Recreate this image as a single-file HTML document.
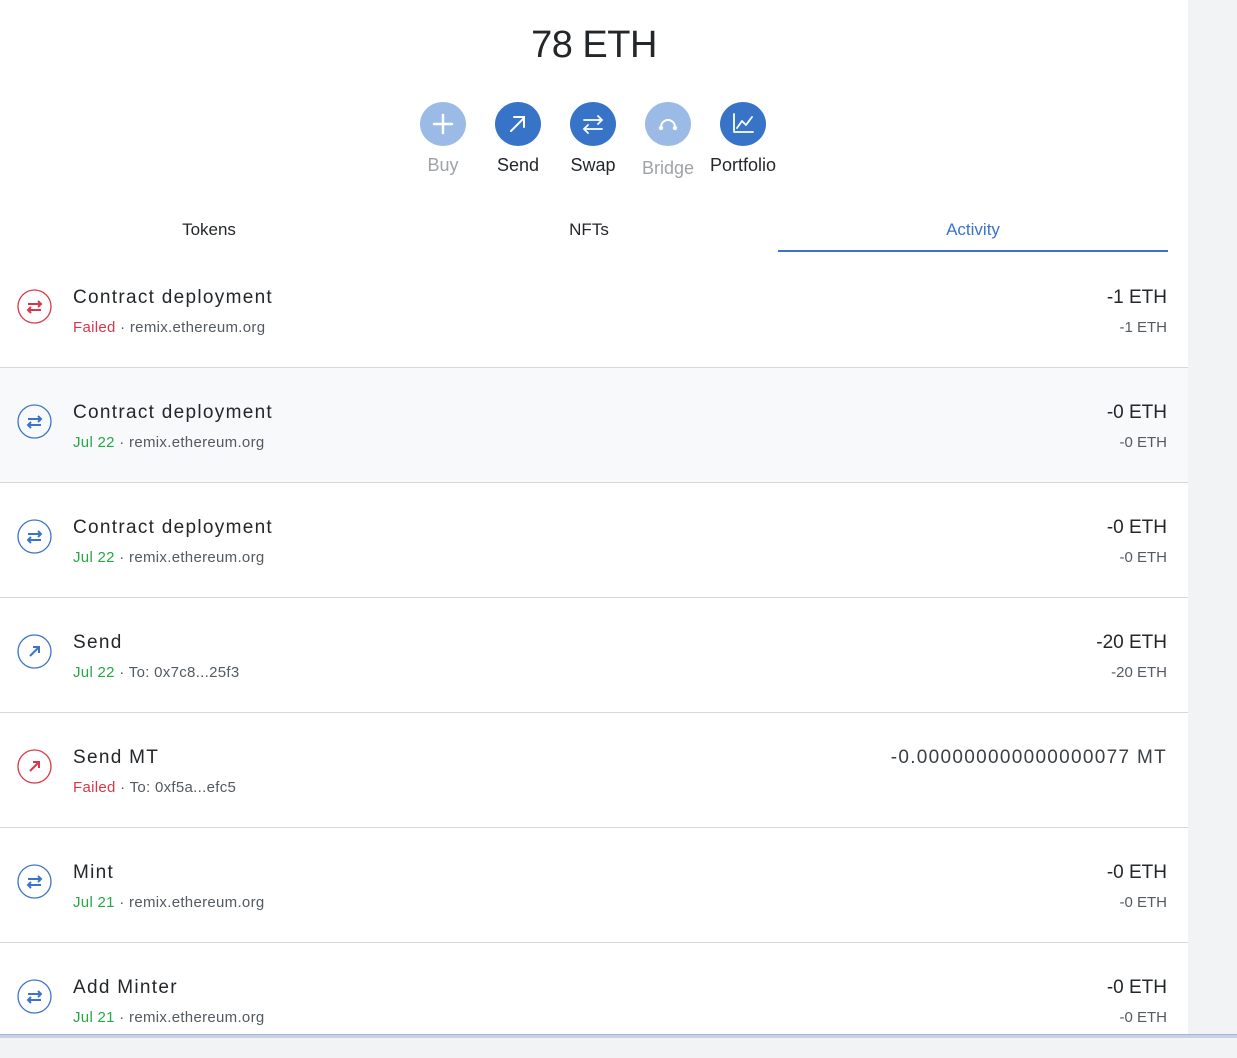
<!DOCTYPE html>
<html><head><meta charset="utf-8"><style>
*{margin:0;padding:0;box-sizing:border-box}
body{width:1237px;height:1038px;overflow:hidden;background:#f2f3f4;font-family:"Liberation Sans",sans-serif;color:#24272a;position:relative}
.main{position:absolute;left:0;top:0;width:1188px;height:1038px;background:#fff}
.bal{position:absolute;top:24px;left:0;width:1188px;text-align:center;font-size:38px;color:#24272a;letter-spacing:-0.5px}
.btn{position:absolute;top:102px;width:46px;height:44px;border-radius:50%;background:#3773c7}
.btn.dis{background:#9bbbe6}
.btn svg{position:absolute;left:0;top:0}
.bl{position:absolute;top:155px;font-size:18px;width:100px;text-align:center;color:#24272a}
.bl.dis{color:#9fa3a8}
.tab{position:absolute;top:220px;font-size:17px;width:390px;text-align:center}
.ul{position:absolute;left:778px;top:250px;width:390px;height:2px;background:#3a74c9}
.row{position:absolute;left:0;width:1188px;height:115px;border-bottom:1px solid #d6d9dc}
.row.alt{background:#f7f9fb}
.ic{position:absolute;left:17px;top:36px;width:35px;height:35px}
.t{position:absolute;left:73px;top:34px;font-size:19px;color:#24272a;letter-spacing:1.3px}
.s{position:absolute;left:73px;top:66px;font-size:15px;color:#535a61;letter-spacing:0.3px}
.r1{position:absolute;right:21px;top:34px;font-size:19px;color:#24272a}
.r2{position:absolute;right:21px;top:66px;font-size:15px;color:#535a61}
.f{color:#d73847}.g{color:#28a745}
.bot{position:absolute;left:0;top:1034px;width:1237px;height:4px;background:#c7d2e6;border-top:1px solid #aab4c4}
</style></head><body>
<div class="main">
<div class="bal">78 ETH</div>
<div class="btn dis" style="left:420px"><svg width="46" height="44"><path d="M23 13v18M14 22h18" stroke="#fff" stroke-width="2.5" stroke-linecap="round"/></svg></div>
<div class="btn" style="left:495px"><svg width="46" height="44"><path d="M16 29L29 16M19 15h10v10" stroke="#fff" stroke-width="2" fill="none" stroke-linecap="round"/></svg></div>
<div class="btn" style="left:570px"><svg width="46" height="44"><path d="M14 18h18M28 14l4 4-4 4M32 27H14M18 23l-4 4 4 4" stroke="#fff" stroke-width="1.8" fill="none" stroke-linecap="round"/></svg></div>
<div class="btn dis" style="left:645px"><svg width="46" height="44"><path d="M16 25a7 7 0 0 1 14 0" stroke="#fff" stroke-width="2" fill="none"/><circle cx="16" cy="26" r="2.2" fill="#fff"/><circle cx="30" cy="26" r="2.2" fill="#fff"/></svg></div>
<div class="btn" style="left:720px"><svg width="46" height="44"><path d="M14 12v18h19M17 26l5-7 4 4 6-8" stroke="#fff" stroke-width="1.8" fill="none" stroke-linecap="round" stroke-linejoin="round"/></svg></div>
<div class="bl dis" style="left:393px">Buy</div>
<div class="bl" style="left:468px">Send</div>
<div class="bl" style="left:543px">Swap</div>
<div class="bl dis" style="left:618px;top:158px">Bridge</div>
<div class="bl" style="left:693px">Portfolio</div>
<div class="tab" style="left:14px">Tokens</div>
<div class="tab" style="left:394px">NFTs</div>
<div class="tab" style="left:778px;color:#3a74c9">Activity</div>
<div class="ul"></div>

<div class="row" style="top:253px"><svg class="ic" viewBox="0 0 35 35"><circle cx="17.5" cy="17.5" r="16.5" fill="none" stroke="#d73847" stroke-width="1.3"/><path d="M11 15h13M21 12l3 3-3 3M24 21H11M14 18l-3 3 3 3" stroke="#d73847" stroke-width="2" fill="none"/></svg><div class="t">Contract deployment</div><div class="s"><span class="f">Failed</span> · remix.ethereum.org</div><div class="r1">-1 ETH</div><div class="r2">-1 ETH</div></div>
<div class="row alt" style="top:368px"><svg class="ic" viewBox="0 0 35 35"><circle cx="17.5" cy="17.5" r="16.5" fill="none" stroke="#3a74c9" stroke-width="1.3"/><path d="M11 15h13M21 12l3 3-3 3M24 21H11M14 18l-3 3 3 3" stroke="#3a74c9" stroke-width="2" fill="none"/></svg><div class="t">Contract deployment</div><div class="s"><span class="g">Jul 22</span> · remix.ethereum.org</div><div class="r1">-0 ETH</div><div class="r2">-0 ETH</div></div>
<div class="row" style="top:483px"><svg class="ic" viewBox="0 0 35 35"><circle cx="17.5" cy="17.5" r="16.5" fill="none" stroke="#3a74c9" stroke-width="1.3"/><path d="M11 15h13M21 12l3 3-3 3M24 21H11M14 18l-3 3 3 3" stroke="#3a74c9" stroke-width="2" fill="none"/></svg><div class="t">Contract deployment</div><div class="s"><span class="g">Jul 22</span> · remix.ethereum.org</div><div class="r1">-0 ETH</div><div class="r2">-0 ETH</div></div>
<div class="row" style="top:598px"><svg class="ic" viewBox="0 0 35 35"><circle cx="17.5" cy="17.5" r="16.5" fill="none" stroke="#3a74c9" stroke-width="1.3"/><path d="M13 22l9-9M16 13h6v6" stroke="#3a74c9" stroke-width="2" fill="none"/></svg><div class="t">Send</div><div class="s"><span class="g">Jul 22</span> · To: 0x7c8...25f3</div><div class="r1">-20 ETH</div><div class="r2">-20 ETH</div></div>
<div class="row" style="top:713px"><svg class="ic" viewBox="0 0 35 35"><circle cx="17.5" cy="17.5" r="16.5" fill="none" stroke="#d73847" stroke-width="1.3"/><path d="M13 22l9-9M16 13h6v6" stroke="#d73847" stroke-width="2" fill="none"/></svg><div class="t">Send MT</div><div class="s"><span class="f">Failed</span> · To: 0xf5a...efc5</div><div class="r1" style="color:#3b4046;letter-spacing:1.3px">-0.000000000000000077 MT</div></div>
<div class="row" style="top:828px"><svg class="ic" viewBox="0 0 35 35"><circle cx="17.5" cy="17.5" r="16.5" fill="none" stroke="#3a74c9" stroke-width="1.3"/><path d="M11 15h13M21 12l3 3-3 3M24 21H11M14 18l-3 3 3 3" stroke="#3a74c9" stroke-width="2" fill="none"/></svg><div class="t">Mint</div><div class="s"><span class="g">Jul 21</span> · remix.ethereum.org</div><div class="r1">-0 ETH</div><div class="r2">-0 ETH</div></div>
<div class="row" style="top:943px;border-bottom:none"><svg class="ic" viewBox="0 0 35 35"><circle cx="17.5" cy="17.5" r="16.5" fill="none" stroke="#3a74c9" stroke-width="1.3"/><path d="M11 15h13M21 12l3 3-3 3M24 21H11M14 18l-3 3 3 3" stroke="#3a74c9" stroke-width="2" fill="none"/></svg><div class="t">Add Minter</div><div class="s"><span class="g">Jul 21</span> · remix.ethereum.org</div><div class="r1">-0 ETH</div><div class="r2">-0 ETH</div></div>
</div>
<div class="bot"></div>
</body></html>
